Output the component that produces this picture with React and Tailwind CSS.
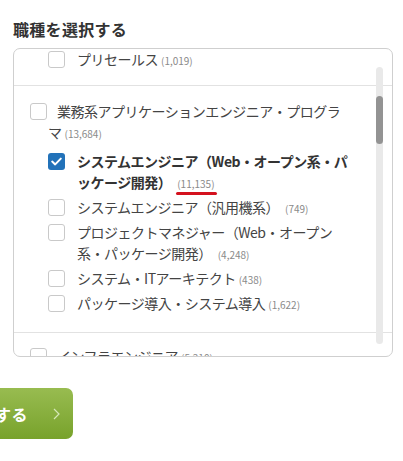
import React from "react";

const FONT = { fontFamily: '"Noto Sans CJK JP", "Noto Sans", sans-serif' };

function Box({ checked, inline }) {
  if (checked) {
    return (
      <span className={`${inline ? "inline-flex align-[-3px] mr-[10px]" : "flex"} w-[17px] h-[17px] shrink-0 rounded-[3px] bg-[#2272b9] items-center justify-center`}>
        <svg width="11" height="9" viewBox="0 0 11 9" fill="none">
          <path d="M1.2 4.6 L4.2 7.4 L9.8 1.6" stroke="white" strokeWidth="2" strokeLinecap="round" strokeLinejoin="round" />
        </svg>
      </span>
    );
  }
  return (
    <span className={`${inline ? "inline-block align-[-3px] mr-[10px]" : "block"} w-[17px] h-[17px] shrink-0 rounded-[3px] border border-[#c9c9c9] bg-white`} />
  );
}

function Count({ children, ml = "ml-[3px]" }) {
  return <span className={`text-[10px] leading-none text-[#8a8a8a] font-normal tracking-normal ${ml}`}>{children}</span>;
}

function Child({ children, checked, bold }) {
  return (
    <div className="flex items-start pl-[34px]">
      <div className="pt-[2px]"><Box checked={checked} /></div>
      <p className={`ml-[12px] w-[280px] text-[14px] leading-[21px] tracking-[-0.5px] ${bold ? "font-bold text-[#333]" : "text-[#444]"}`}>
        {children}
      </p>
    </div>
  );
}

export default function App() {
  return (
    <div className="w-[403px] h-[461px] bg-white overflow-hidden" style={FONT}>
      <div className="pt-[17px] px-[13px]">
        <h2 className="text-[16px] leading-[24px] font-bold text-[#333] tracking-[0.3px]">職種を選択する</h2>
        <div className="relative mt-[7px] w-[380px] h-[309px] border border-[#cfcfcf] rounded-[7px] overflow-hidden">
          <div className="pb-[15px]">
            <Child>プリセールス<Count>(1,019)</Count></Child>
          </div>
          <div className="border-t border-[#e2e2e2] pt-[15px] pb-[18px]">
            <p className="pl-[34px] indent-[-18px] w-[340px] text-[14px] leading-[21px] tracking-[-0.5px] text-[#444] mb-[8px]">
              <Box inline />
              業務系アプリケーションエンジニア・プログラ<br />マ<Count>(13,684)</Count>
            </p>
            <div className="flex flex-col gap-[4px]">
              <Child checked bold>
                システムエンジニア（Web・オープン系・パ<br />ッケージ開発）
                <span className="relative inline-block ml-[6px] text-[10px] leading-none text-[#8a8a8a] font-normal tracking-normal">
                  (11,135)
                  <span className="absolute left-[-1px] right-[-2px] bottom-[-6px] h-[3px] rounded-full bg-[#d4111e]" />
                </span>
              </Child>
              <Child>システムエンジニア（汎用機系）<Count ml="ml-[6px]">(749)</Count></Child>
              <Child>プロジェクトマネジャー（Web・オープン<br />系・パッケージ開発）<Count ml="ml-[6px]">(4,248)</Count></Child>
              <Child>システム・ITアーキテクト<Count>(438)</Count></Child>
              <Child>パッケージ導入・システム導入<Count>(1,622)</Count></Child>
            </div>
          </div>
          <div className="border-t border-[#e2e2e2] pt-[13px]">
            <p className="pl-[34px] indent-[-18px] w-[340px] text-[14px] leading-[21px] tracking-[-0.5px] text-[#444]">
              <Box inline />
              インフラエンジニア<Count>(5,210)</Count>
            </p>
          </div>
          <div className="absolute left-[362px] top-[18px] w-[7px] h-[277px] rounded-full bg-[#e9e9e9]">
            <div className="mt-[29px] h-[48px] rounded-full bg-[#939393]" />
          </div>
        </div>
      </div>
      <div className="mt-[31px]">
        <button className="flex items-center w-[73px] h-[51px] rounded-r-[7px] bg-gradient-to-b from-[#98bc50] to-[#78a22a] text-white">
          <span className="text-[16px] font-bold leading-none ml-[-5px] tracking-[0.5px]">する</span>
          <svg className="ml-[25px]" width="7" height="12" viewBox="0 0 7 12" fill="none">
            <path d="M1 1 L6 6 L1 11" stroke="#d6e7b8" strokeWidth="1.2" />
          </svg>
        </button>
      </div>
    </div>
  );
}
